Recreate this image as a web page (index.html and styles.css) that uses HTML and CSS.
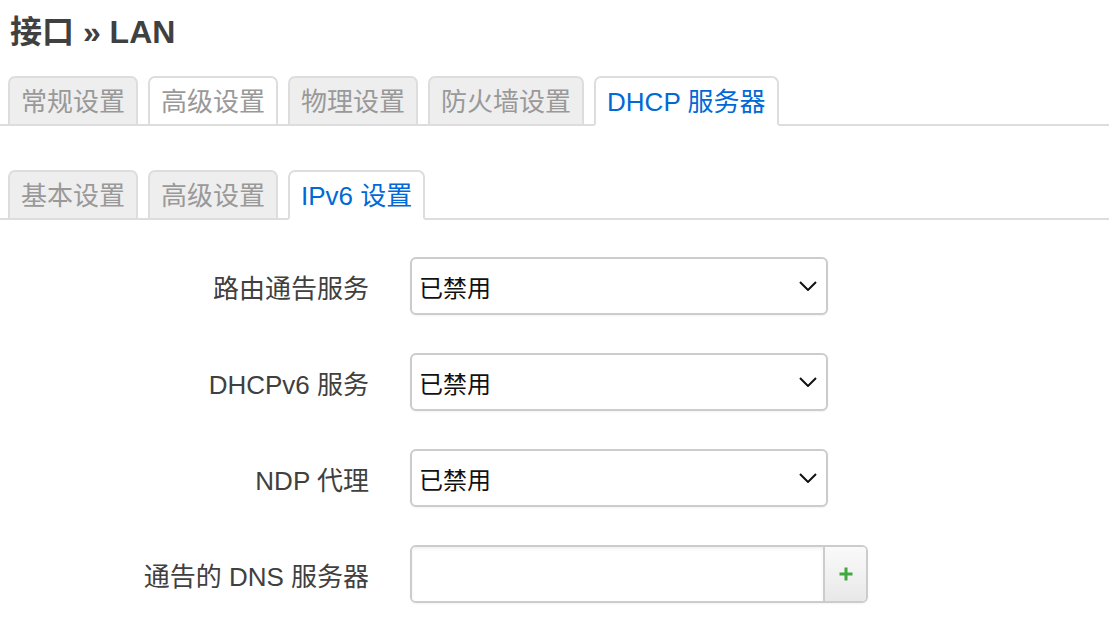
FILE: index.html
```html
<!DOCTYPE html>
<html lang="zh-CN">
<head>
<meta charset="utf-8">
<title>接口 » LAN</title>
<link rel="stylesheet" href="styles.css">
</head>
<body>
<h2 class="page-title">接口 » LAN</h2>

<ul class="tabs main-tabs">
  <li class="tab"><a>常规设置</a></li>
  <li class="tab hover"><a>高级设置</a></li>
  <li class="tab"><a>物理设置</a></li>
  <li class="tab"><a>防火墙设置</a></li>
  <li class="tab active"><a>DHCP 服务器</a></li>
</ul>

<ul class="tabs sub-tabs">
  <li class="tab"><a>基本设置</a></li>
  <li class="tab"><a>高级设置</a></li>
  <li class="tab active"><a>IPv6 设置</a></li>
</ul>

<div class="form">
  <div class="row">
    <label class="row-label">路由通告服务</label>
    <div class="select">
      <span class="select-value">已禁用</span>
      <svg class="chevron" width="18" height="10" viewBox="0 0 18 10"><path d="M1 1 L9 9 L17 1" fill="none" stroke="#111" stroke-width="2"/></svg>
    </div>
  </div>
  <div class="row">
    <label class="row-label">DHCPv6 服务</label>
    <div class="select">
      <span class="select-value">已禁用</span>
      <svg class="chevron" width="18" height="10" viewBox="0 0 18 10"><path d="M1 1 L9 9 L17 1" fill="none" stroke="#111" stroke-width="2"/></svg>
    </div>
  </div>
  <div class="row">
    <label class="row-label">NDP 代理</label>
    <div class="select">
      <span class="select-value">已禁用</span>
      <svg class="chevron" width="18" height="10" viewBox="0 0 18 10"><path d="M1 1 L9 9 L17 1" fill="none" stroke="#111" stroke-width="2"/></svg>
    </div>
  </div>
  <div class="row">
    <label class="row-label">通告的 DNS 服务器</label>
    <div class="input-group">
      <div class="text-input"></div>
      <div class="add-btn">
        <svg width="14" height="14" viewBox="0 0 14 14"><path d="M7 0.5 V13.5 M0.5 7 H13.5" stroke="#3fa93f" stroke-width="3"/></svg>
      </div>
    </div>
  </div>
  <div class="row">
    <label class="row-label"></label>
    <div class="input-group">
      <div class="text-input"></div>
      <div class="add-btn"></div>
    </div>
  </div>
</div>
</body>
</html>
```
FILE: styles.css
```css
html, body {
  margin: 0;
  padding: 0;
  background: #fff;
}
body {
  font-family: "Liberation Sans", "Noto Sans CJK SC", sans-serif;
  color: #404040;
  font-size: 26px;
  overflow: hidden;
}
.page-title {
  margin: 0 0 26px 0;
  padding: 14px 0 0 10px;
  height: 36px;
  line-height: 36px;
  font-size: 32px;
  font-weight: bold;
  color: #404040;
}
.tabs {
  list-style: none;
  margin: 0;
  padding: 0 0 0 8px;
  display: flex;
  gap: 10px;
  border-bottom: 2px solid #ddd;
}
.sub-tabs {
  margin-top: 44px;
}
.tab {
  margin-bottom: -2px;
}
.tab a {
  display: block;
  height: 46px;
  line-height: 48px;
  padding: 0 11px;
  border: 2px solid #ddd;
  border-radius: 7px 7px 0 0;
  background: #eee;
  color: #999;
  white-space: nowrap;
}
.tab.hover a {
  background: #fff;
}
.tab.active a {
  background: #fff;
  color: #0069d6;
  border-bottom-color: #fff;
}
.form {
  padding-top: 37px;
}
.row {
  display: flex;
  align-items: center;
  margin-bottom: 38px;
}
.row-label {
  width: 369px;
  text-align: right;
  padding-right: 41px;
  color: #404040;
  flex: none;
}
.select {
  box-sizing: border-box;
  width: 418px;
  height: 58px;
  border: 2px solid #ccc;
  border-radius: 6px;
  display: flex;
  align-items: center;
  justify-content: space-between;
  padding: 0 9px 0 7px;
  box-shadow: 0 1px 2px rgba(0,0,0,0.05);
  background: #fff;
}
.select-value {
  font-size: 24px;
  color: #111;
}
.chevron {
  display: block;
}
.input-group {
  display: flex;
  box-sizing: border-box;
  width: 458px;
  height: 58px;
  border: 2px solid #ccc;
  border-radius: 6px;
  overflow: hidden;
  box-shadow: 0 1px 2px rgba(0,0,0,0.05);
}
.text-input {
  flex: 1;
  background: #fff;
  box-shadow: inset 0 2px 3px rgba(0,0,0,0.06);
}
.add-btn {
  width: 41px;
  flex: none;
  border-left: 2px solid #ccc;
  background: linear-gradient(#fafafa, #e8e8e8);
  display: flex;
  align-items: center;
  justify-content: center;
}
.add-btn svg {
  display: block;
}
```
